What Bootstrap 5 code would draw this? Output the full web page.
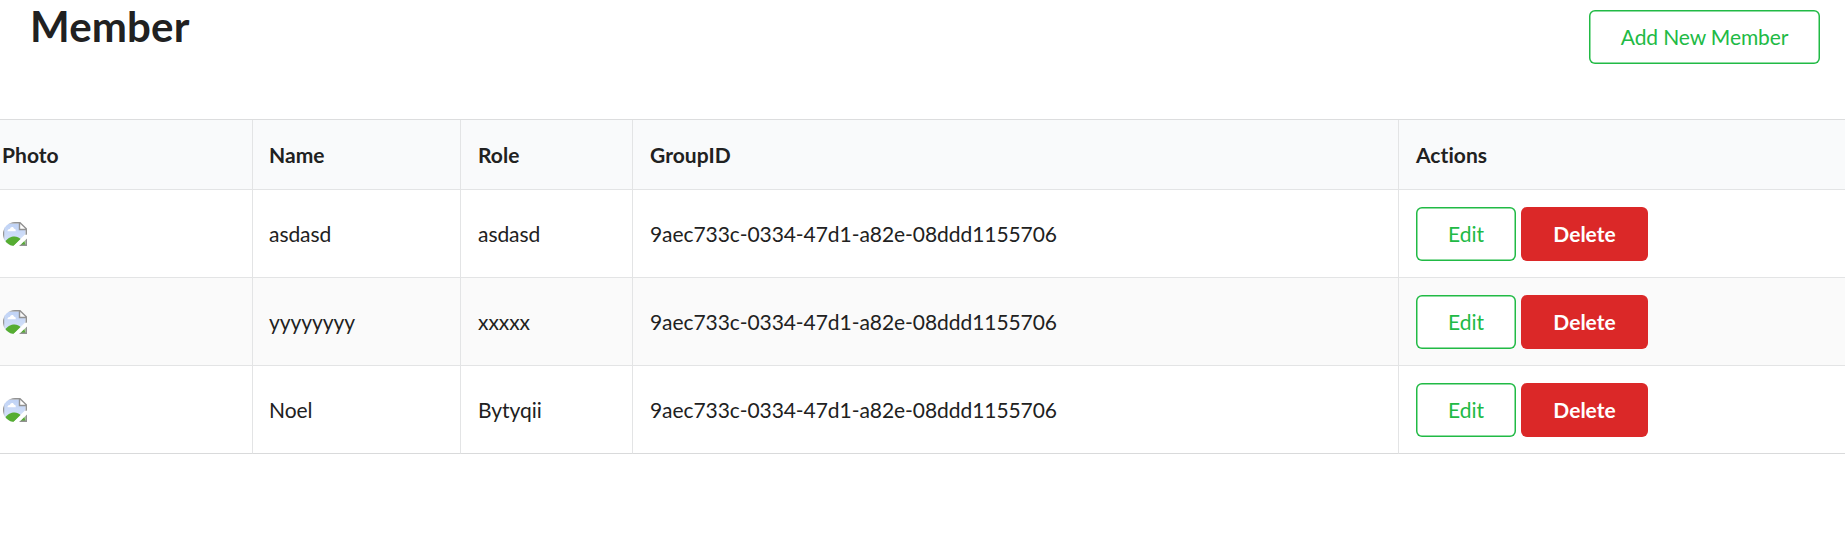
<!DOCTYPE html>
<html lang="en">
<head>
<meta charset="utf-8">
<title>Member</title>
<link href="https://cdn.jsdelivr.net/npm/bootstrap@5.3.0/dist/css/bootstrap.min.css" rel="stylesheet">
<style>
body { font-family: Lato, "Liberation Sans", sans-serif; font-size: 21px; line-height: 30px; color: #212121; overflow: hidden; font-variant-ligatures: none; }
.page-head { height: 119px; padding: 10px 25px 0 30px; }
.page-title { font-size: 42px; line-height: 54px; margin-top: -11px; font-weight: 700; letter-spacing: .15px; }
.btn { --bs-btn-font-size: 21px; --bs-btn-line-height: 21px; --bs-btn-border-radius: 6px; --bs-btn-border-width: 0; --bs-btn-padding-x: 0; --bs-btn-padding-y: 0; height: 54px; }
.btn-line { --bs-btn-color: #21ba45; --bs-btn-bg: #fff; box-shadow: inset 0 0 0 1.5px #21ba45; }
.btn-remove { --bs-btn-color: #fff; --bs-btn-bg: #db2828; --bs-btn-font-weight: 700; width: 127px; }
.btn-add { width: 231px; letter-spacing: -.12px; padding-bottom: 2px; }
.btn-edit { width: 100px; }
.member-table { table-layout: fixed; border-collapse: separate; border-spacing: 0; border-top: 1px solid #dcddde; color: #212121; }
.member-table > :not(caption) > * > * { padding: 0 0 0 17px; border: 0 solid #e3e4e5; border-width: 0 1px 1px 0; background: none; color: inherit; box-shadow: none; }
.member-table > * > tr > :first-child { padding-left: 3px; }
.member-table > * > tr > :nth-child(2) { padding-left: 16px; }
.member-table > * > tr > :last-child { border-right: 0; }
.member-table th { height: 70px; background: #f9fafb !important; font-weight: 700; vertical-align: middle; letter-spacing: .05px; }
.member-table th:first-child { padding-left: 2px; }
.member-table td { height: 88px; letter-spacing: -.06px; }
.member-table tbody tr:nth-child(2) td { background: #fafafa; }
.member-table tbody tr:last-child td { border-bottom-color: #d9dadb; }
.member-table .d-flex { gap: 5px; }
.photo { display: block; width: 24px; height: 24px; }
</style>
</head>
<body>
<svg width="0" height="0" class="position-absolute" aria-hidden="true">
  <defs>
    <linearGradient id="sky" x1="0" y1="0" x2="0" y2="1"><stop offset="0" stop-color="#bfd2f5"/><stop offset="1" stop-color="#dbe6fb"/></linearGradient>
    <clipPath id="round"><path d="M24 0V24H12A12 12 0 0 1 12 0Z"/></clipPath>
    <symbol id="missing" viewBox="0 0 24 24">
      <g clip-path="url(#round)">
        <path d="M1 1.500H16V7.500H22.500V12L10 24H1Z" fill="url(#sky)"/>
        <path d="M4.500 9.200C4.500 7.500 6 6.700 7 7C7.300 4.300 10.700 4.300 11 6.700C12.500 6.500 13 8 12.700 9.200Z" fill="#fff"/>
        <path d="M2 20C4.500 16 8 14.500 11.500 14.500C14 14.500 16 15.500 17.500 17L10.500 24H2Z" fill="#56ad32"/>
        <path d="M15 24L24 15.500V24Z" fill="#b5d7a5"/>
        <path d="M17.500 23L21 18.500L22.500 23Z" fill="#56a937"/>
        <path d="M0 .7H17L23.300 6.800V7.500H16.500V.7M.5 0V24M23.300 7V13M15 23.300H23.300V15.500" fill="none" stroke="#929292" stroke-width="1.400"/>
        <path d="M9.500 25L25 11.500V15.500L15 25Z" fill="#fff"/>
      </g>
    </symbol>
  </defs>
</svg>

<header class="page-head d-flex justify-content-between align-items-start">
  <h1 class="page-title mb-0">Member</h1>
  <button type="button" class="btn btn-line btn-add">Add New Member</button>
</header>

<table class="table member-table align-middle mb-0">
  <colgroup><col style="width:253px"><col style="width:208px"><col style="width:172px"><col style="width:766px"><col></colgroup>
  <thead>
    <tr><th>Photo</th><th>Name</th><th>Role</th><th>GroupID</th><th>Actions</th></tr>
  </thead>
  <tbody>
    <tr>
      <td><svg class="photo"><use href="#missing"/></svg></td><td>asdasd</td><td>asdasd</td><td>9aec733c-0334-47d1-a82e-08ddd1155706</td>
      <td><div class="d-flex"><button type="button" class="btn btn-line btn-edit">Edit</button><button type="button" class="btn btn-remove">Delete</button></div></td>
    </tr>
    <tr>
      <td><svg class="photo"><use href="#missing"/></svg></td><td>yyyyyyyy</td><td>xxxxx</td><td>9aec733c-0334-47d1-a82e-08ddd1155706</td>
      <td><div class="d-flex"><button type="button" class="btn btn-line btn-edit">Edit</button><button type="button" class="btn btn-remove">Delete</button></div></td>
    </tr>
    <tr>
      <td><svg class="photo"><use href="#missing"/></svg></td><td>Noel</td><td>Bytyqii</td><td>9aec733c-0334-47d1-a82e-08ddd1155706</td>
      <td><div class="d-flex"><button type="button" class="btn btn-line btn-edit">Edit</button><button type="button" class="btn btn-remove">Delete</button></div></td>
    </tr>
  </tbody>
</table>
<script src="https://cdn.jsdelivr.net/npm/bootstrap@5.3.0/dist/js/bootstrap.bundle.min.js"></script>
</body>
</html>
